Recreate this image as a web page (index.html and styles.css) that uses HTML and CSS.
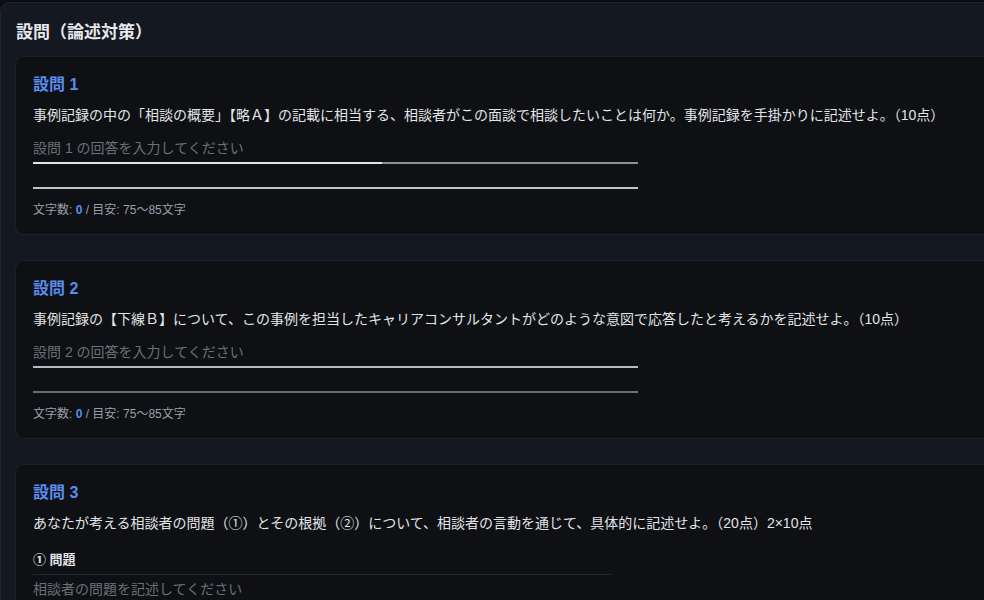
FILE: index.html
```html
<!DOCTYPE html>
<html lang="ja">
<head>
<meta charset="utf-8">
<title>設問（論述対策）</title>
<link rel="stylesheet" href="styles.css">
</head>
<body>
<section class="panel">
  <h2 class="panel-title">設問（論述対策）</h2>
  <div class="cards">
    <article class="card">
      <h3 class="q-title">設問 1</h3>
      <p class="q-text">事例記録の中の「相談の概要」【略Ａ】の記載に相当する、相談者がこの面談で相談したいことは何か。事例記録を手掛かりに記述せよ。（10点）</p>
      <div class="answer">
        <div class="ph">設問 1 の回答を入力してください</div>
        <div class="rule rule-a1"></div>
        <div class="gap"></div>
        <div class="rule rule-b1"></div>
      </div>
      <div class="count">文字数: <b>0</b> / 目安: 75〜85文字</div>
    </article>
    <article class="card">
      <h3 class="q-title">設問 2</h3>
      <p class="q-text">事例記録の【下線Ｂ】について、この事例を担当したキャリアコンサルタントがどのような意図で応答したと考えるかを記述せよ。（10点）</p>
      <div class="answer">
        <div class="ph">設問 2 の回答を入力してください</div>
        <div class="rule rule-a2"></div>
        <div class="gap"></div>
        <div class="rule rule-b2"></div>
      </div>
      <div class="count">文字数: <b>0</b> / 目安: 75〜85文字</div>
    </article>
    <article class="card">
      <h3 class="q-title">設問 3</h3>
      <p class="q-text">あなたが考える相談者の問題（①）とその根拠（②）について、相談者の言動を通じて、具体的に記述せよ。（20点）2×10点</p>
      <div class="sub">
        <div class="sub-label">① 問題</div>
        <div class="sub-box">相談者の問題を記述してください</div>
      </div>
    </article>
  </div>
</section>
</body>
</html>
```

FILE: styles.css
```css
html, body {
  margin: 0;
  padding: 0;
  background: #0b0d11;
  overflow: hidden;
  width: 984px;
  height: 600px;
}
body {
  padding-top: 2px;
  font-family: "Liberation Sans", "Noto Sans CJK JP", sans-serif;
  color: #e4e6eb;
}
.panel {
  width: 1100px;
  box-sizing: border-box;
  background: #141821;
  border: 1px solid #20252f;
  border-radius: 10px;
  padding: 17px 14px 40px 14px;
}
.panel-title {
  margin: 0 0 10px 1px;
  font-size: 17px;
  line-height: 26px;
  font-weight: 700;
  color: #e6e8ec;
}
.cards {
  display: flex;
  flex-direction: column;
  gap: 25px;
}
.card {
  background: #0e1014;
  border: 1px solid #1d222a;
  border-radius: 9px;
  padding: 16px 17px 16px 17px;
}
.q-title {
  margin: 0;
  font-size: 16px;
  line-height: 24px;
  font-weight: 700;
  color: #5a8def;
}
.q-text {
  margin: 7px 0 0 0;
  font-size: 14px;
  line-height: 22px;
  color: #e2e4e8;
}
.answer {
  width: 605px;
  margin-top: 11px;
}
.ph {
  font-size: 14px;
  line-height: 22px;
  color: #6b6f78;
  padding-bottom: 3px;
}
.rule {
  height: 2px;
}
.rule-a1 {
  background: linear-gradient(to right, #e4e4e6 0, #e4e4e6 349px, #8f9094 349px);
}
.rule-b1 { background: #c3c4c8; }
.rule-a2 { background: #b9babd; }
.rule-b2 { background: #6d6e72; }
.gap { height: 23px; }
.count {
  margin-top: 13px;
  font-size: 12px;
  line-height: 16px;
  color: #9a9ea6;
}
.count b {
  color: #5a8def;
  font-weight: 700;
}
.sub {
  margin-top: 16px;
}
.sub-label {
  font-size: 13px;
  line-height: 20px;
  font-weight: 700;
  color: #e6e8ec;
  margin-bottom: 4px;
}
.sub-box {
  width: 578px;
  border-top: 1px solid #22262d;
  padding-top: 3px;
  font-size: 14px;
  line-height: 22px;
  color: #6b6f78;
}
```
